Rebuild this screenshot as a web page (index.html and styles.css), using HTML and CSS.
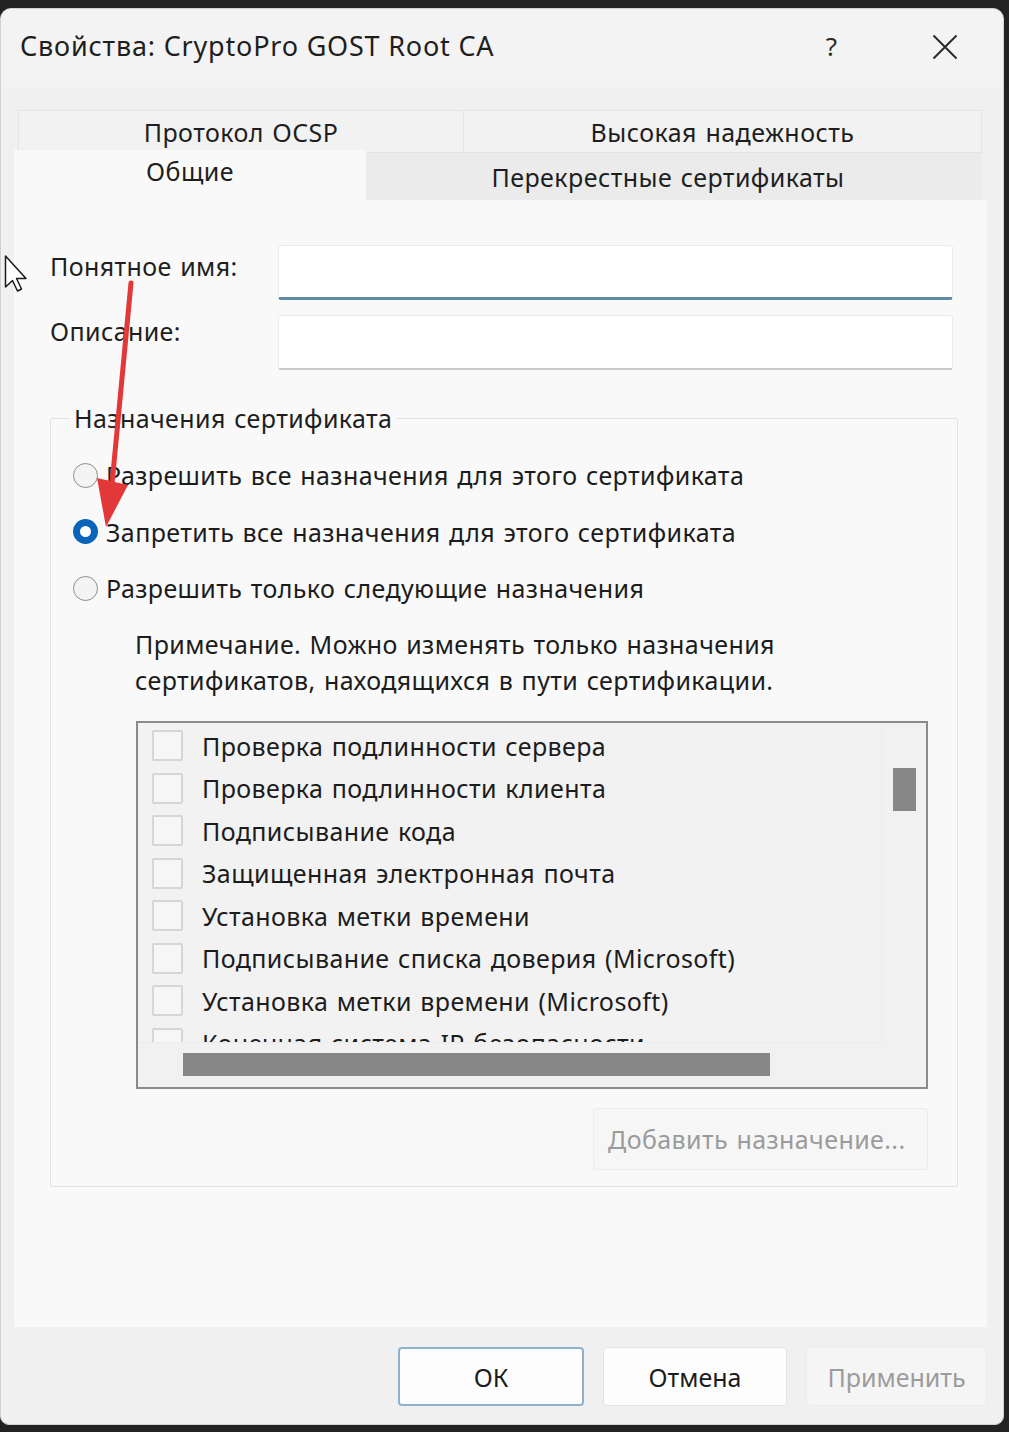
FILE: index.html
```html
<!DOCTYPE html>
<html lang="ru">
<head>
<meta charset="utf-8">
<title>Свойства: CryptoPro GOST Root CA</title>
<link rel="stylesheet" href="styles.css">
</head>
<body>
<div class="window">
  <div class="titlebar">
    <span class="title">Свойства: CryptoPro GOST Root CA</span>
    <span class="help">?</span>
    <span class="close">
      <svg width="26" height="26" viewBox="0 0 26 26"><path d="M1.5 1.5 L24.5 24.5 M24.5 1.5 L1.5 24.5" stroke="#2a2a2a" stroke-width="2" fill="none"/></svg>
    </span>
  </div>
  <div class="content">
    <div class="tabs">
      <div class="tabrow row1">
        <div class="tab t-ocsp">Протокол OCSP</div>
        <div class="tab t-high">Высокая надежность</div>
      </div>
      <div class="tabrow row2">
        <div class="tab t-general">Общие</div>
        <div class="tab t-cross">Перекрестные сертификаты</div>
      </div>
    </div>
    <div class="panel">
      <div class="fields">
        <span class="label l-name">Понятное имя:</span>
        <div class="input focus"></div>
        <span class="label l-desc">Описание:</span>
        <div class="input"></div>
      </div>
      <fieldset class="group">
        <legend>Назначения сертификата</legend>
        <div class="radios">
          <div class="radio"><span class="dot"></span><span>Разрешить все назначения для этого сертификата</span></div>
          <div class="radio"><span class="dot on"></span><span>Запретить все назначения для этого сертификата</span></div>
          <div class="radio"><span class="dot"></span><span>Разрешить только следующие назначения</span></div>
        </div>
        <p class="note">Примечание. Можно изменять только назначения<br>сертификатов, находящихся в пути сертификации.</p>
        <div class="listbox">
          <div class="items">
            <div class="item"><span class="check"></span><span>Проверка подлинности сервера</span></div>
            <div class="item"><span class="check"></span><span>Проверка подлинности клиента</span></div>
            <div class="item"><span class="check"></span><span>Подписывание кода</span></div>
            <div class="item"><span class="check"></span><span>Защищенная электронная почта</span></div>
            <div class="item"><span class="check"></span><span>Установка метки времени</span></div>
            <div class="item"><span class="check"></span><span>Подписывание списка доверия (Microsoft)</span></div>
            <div class="item"><span class="check"></span><span>Установка метки времени (Microsoft)</span></div>
            <div class="item"><span class="check"></span><span>Конечная система IP-безопасности</span></div>
          </div>
          <div class="vscroll"><span class="vthumb"></span></div>
          <div class="hscroll"><span class="hthumb"></span></div>
          <div class="corner"></div>
        </div>
        <div class="addrow"><span class="btn-add">Добавить назначение...</span></div>
      </fieldset>
    </div>
    <div class="buttons">
      <span class="btn btn-ok">ОК</span>
      <span class="btn">Отмена</span>
      <span class="btn btn-disabled">Применить</span>
    </div>
  </div>
</div>
<svg class="overlay" width="1009" height="1432" viewBox="0 0 1009 1432">
  <path d="M131 283 L112 484" stroke="#e2383a" stroke-width="5" stroke-linecap="round" fill="none"/>
  <polygon points="97,478 128,485 106,527" fill="#e2383a"/>
  <path d="M5.5 256 L5.5 287 L12.5 280.5 L17.5 291 L21.5 289 L16.5 278.5 L26 278.5 Z" fill="#ffffff" stroke="#1a1a1a" stroke-width="1.5" stroke-linejoin="round"/>
</svg>
</body>
</html>
```

FILE: styles.css
```css
* { box-sizing: border-box; }

html, body {
  margin: 0;
  padding: 0;
  background: #232323;
  width: 1009px;
  height: 1432px;
  overflow: hidden;
  font-family: "Noto Sans", "Open Sans", "DejaVu Sans", sans-serif;
  color: #1c1c1c;
}

.window {
  margin-top: 8px;
  width: 1004px;
  height: 1417px;
  background: #f0f0f0;
  border: 1px solid #d2d2d2;
  border-radius: 11px 11px 9px 9px;
  overflow: hidden;
  display: flex;
  flex-direction: column;
}

.titlebar {
  height: 79px;
  flex: none;
  background: #f3f3f3;
  display: flex;
  align-items: center;
  padding: 0 0 5px 19px;
}

.title {
  font-size: 27px;
  line-height: 30px;
  color: #1e1e1e;
  letter-spacing: 0.8px;
  flex: 1;
}

.help {
  font-size: 26px;
  line-height: 30px;
  color: #2a2a2a;
  margin-right: 95px;
}

.close {
  display: flex;
  margin-right: 45px;
  margin-top: 2px;
}

.content {
  flex: 1;
  display: flex;
  flex-direction: column;
  padding: 22px 16px 0 13px;
}

.tabs {
  display: flex;
  flex-direction: column;
  font-size: 25px;
  letter-spacing: 0.45px;
  word-spacing: 1.5px;
}

.tabrow {
  display: flex;
}

.tab {
  display: flex;
  align-items: center;
  justify-content: center;
  color: #1e1e1e;
}

.row1 {
  margin-left: 4px;
  height: 42px;
}

.row1 .tab {
  background: #f2f2f2;
  border-top: 1px solid #e4e4e4;
  padding-top: 1px;
}

.t-ocsp {
  width: 446px;
  border-left: 1px solid #e4e4e4;
  border-right: 1px solid #e4e4e4;
}

.t-high {
  width: 518px;
  border-right: 1px solid #e4e4e4;
}

.row2 {
  height: 48px;
}

.t-general {
  width: 352px;
  height: 50px;
  margin-top: -2px;
  background: #f9f9f9;
  padding-bottom: 8px;
}

.t-cross {
  width: 616px;
  background: #ebebeb;
  border-top: 1px solid #e2e2e2;
  padding-top: 0;
  padding-right: 12px;
}

.panel {
  height: 1127px;
  flex: none;
  background: #f9f9f9;
  padding: 45px 0 0 36px;
  font-size: 25px;
  letter-spacing: 0.4px;
  word-spacing: 1.5px;
}

.fields {
  display: grid;
  grid-template-columns: 228px 675px;
  row-gap: 15px;
}

.label {
  line-height: 30px;
  color: #1e1e1e;
}

.l-name { padding-top: 6px; }
.l-desc { padding-top: 1px; }

.input {
  height: 55px;
  background: #ffffff;
  border: 1px solid #ececec;
  border-bottom: 2px solid #c9c9c9;
  border-radius: 3px;
}

.input.focus {
  border-bottom: 3px solid #5f8aa3;
}

.group {
  margin: 33px 0 0 0;
  width: 908px;
  height: 784px;
  border: 1px solid #e2e2e2;
  border-radius: 2px;
  padding: 0;
  min-width: 0;
}

.group legend {
  margin-left: 19px;
  padding: 0 4px;
  line-height: 30px;
  color: #1e1e1e;
}

.radios {
  margin-top: 14px;
  display: flex;
  flex-direction: column;
}

.radio {
  height: 56.5px;
  display: flex;
  align-items: center;
  padding-left: 22px;
  gap: 8px;
  line-height: 30px;
}

.dot {
  width: 25px;
  height: 25px;
  border-radius: 50%;
  border: 1.5px solid #8d8d8d;
  background: #f4f4f4;
  flex: none;
}

.dot.on {
  border: 7px solid #0a64b8;
  background: #ffffff;
}

.note {
  margin: 9px 0 0 84px;
  line-height: 36px;
}

.listbox {
  margin: 23px 0 0 85px;
  width: 792px;
  height: 368px;
  border: 2px solid #8a8a8a;
  background: #f1f1f1;
  display: grid;
  grid-template-columns: 1fr 44px;
  grid-template-rows: 1fr 44px;
}

.items {
  overflow: hidden;
  padding-top: 2px;
  border-right: 1px solid #ebebeb;
  border-bottom: 1px solid #ebebeb;
  background: #f2f2f2;
}

.item {
  height: 42.5px;
  display: flex;
  align-items: center;
  padding-left: 14px;
  gap: 19px;
  line-height: 30px;
  white-space: nowrap;
}

.check {
  width: 31px;
  height: 31px;
  border: 2px solid #d6d6d6;
  border-radius: 2px;
  background: #f6f6f6;
  flex: none;
}

.vscroll {
  display: flex;
  justify-content: center;
  padding-top: 45px;
}

.vthumb {
  width: 23px;
  height: 43px;
  background: #878787;
}

.hscroll {
  display: flex;
  align-items: center;
  padding-left: 45px;
}

.hthumb {
  width: 587px;
  height: 23px;
  background: #878787;
}

.addrow {
  display: flex;
  justify-content: flex-end;
  padding: 19px 29px 0 0;
}

.btn-add {
  width: 335px;
  height: 62px;
  background: #f6f6f6;
  border: 1px solid #ececec;
  border-radius: 3px;
  color: #9b9b9b;
  display: flex;
  align-items: center;
  padding-left: 14px;
}

.buttons {
  flex: 1;
  display: flex;
  justify-content: flex-end;
  gap: 19px;
  padding-top: 20px;
  font-size: 25px;
}

.btn {
  width: 184px;
  height: 59px;
  background: #fdfdfd;
  border: 1px solid #e3e3e3;
  border-radius: 4px;
  display: flex;
  align-items: center;
  justify-content: center;
  color: #1c1c1c;
}

.btn-ok {
  border: 2px solid #8fb2cc;
  width: 186px;
}

.btn-disabled {
  background: #f5f5f5;
  border-color: #ededed;
  color: #9c9c9c;
  width: 181px;
}

.overlay {
  position: absolute;
  left: 0;
  top: 0;
  pointer-events: none;
}
```
